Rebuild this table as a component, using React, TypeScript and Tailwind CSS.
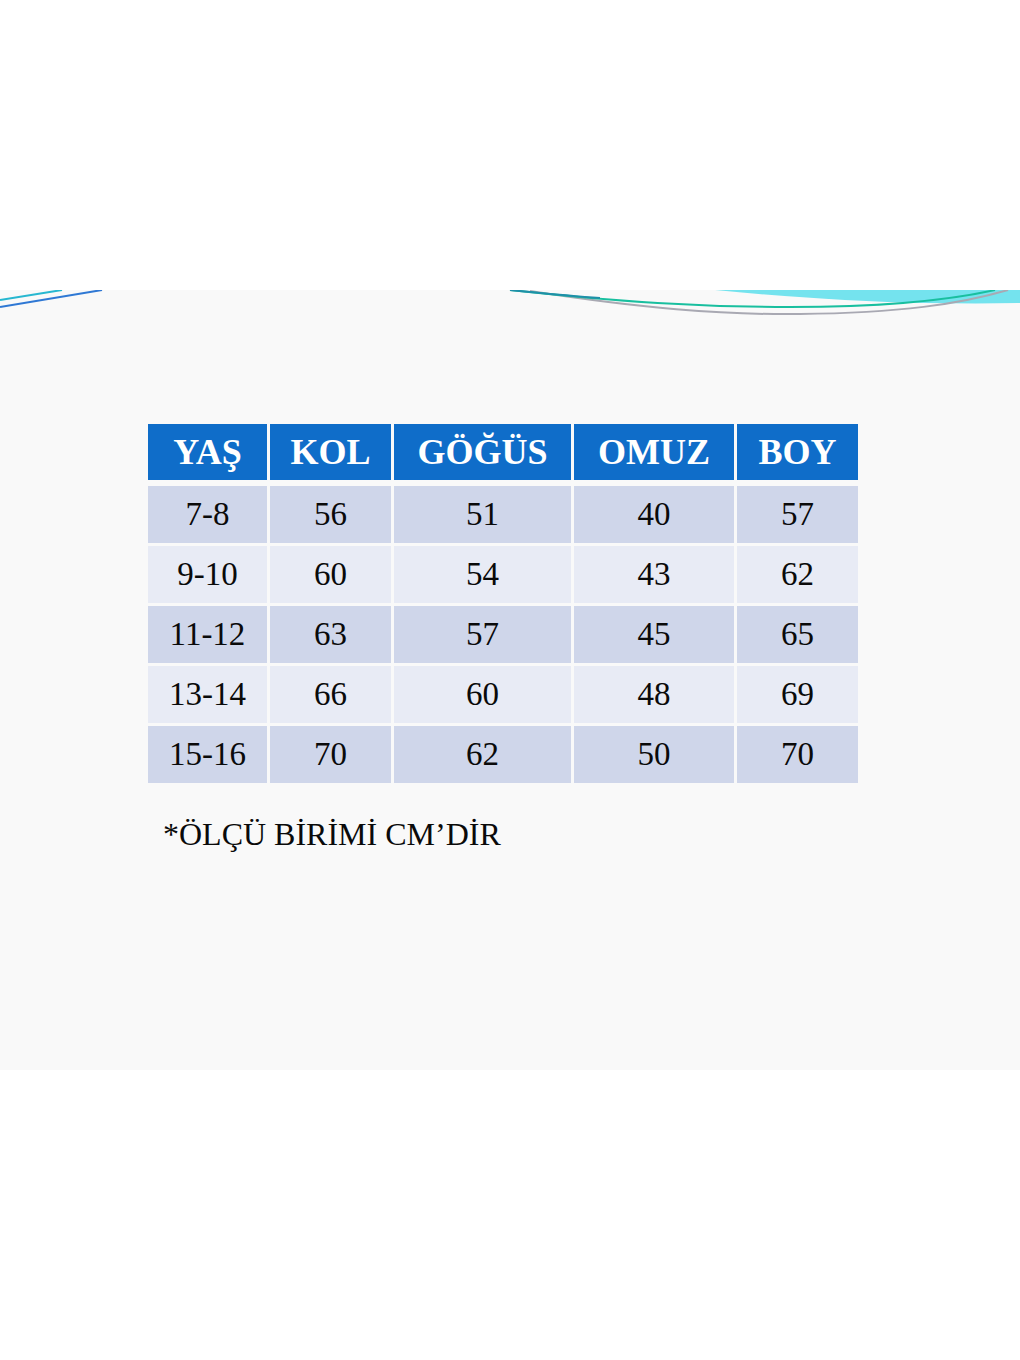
const header = ["YAŞ", "KOL", "GÖĞÜS", "OMUZ", "BOY"];

const rows = [
  ["7-8", "56", "51", "40", "57"],
  ["9-10", "60", "54", "43", "62"],
  ["11-12", "63", "57", "45", "65"],
  ["13-14", "66", "60", "48", "69"],
  ["15-16", "70", "62", "50", "70"],
];

function Waves() {
  return (
    <svg
      className="absolute left-0 top-0 w-full h-[40px]"
      viewBox="0 0 1020 40"
      preserveAspectRatio="none"
    >
      <path d="M0 10 L62 0" stroke="#27b7d0" strokeWidth="2" fill="none" />
      <path d="M0 17 L102 0" stroke="#2f78d4" strokeWidth="2" fill="none" />
      <path d="M715 0 L1020 0 L1020 13 Q880 16 715 0 Z" fill="#74e3ee" />
      <path d="M530 1 C640 18 720 25 800 24 C900 23 960 14 1008 0" stroke="#a9a9b3" strokeWidth="2" fill="none" />
      <path d="M510 0 C620 12 700 17 790 17 C880 17 950 10 995 0" stroke="#19bf9f" strokeWidth="2" fill="none" />
      <path d="M510 0 C540 3 570 6 600 8" stroke="#1f8fa8" strokeWidth="2" fill="none" />
    </svg>
  );
}

export default function App() {
  return (
    <div className="w-[1020px] h-[1360px] bg-white pt-[290px] font-['Liberation_Serif',serif]">
      <div className="relative h-[780px] bg-[#f9f9f9] pt-[134px] pl-[148px]">
        <Waves />

        <div className="w-[710px] grid grid-cols-[119px_121px_177px_160px_121px] gap-x-[3px]">
          {header.map((h) => (
            <div
              key={h}
              className="h-[56px] mb-[6px] bg-[#0f6dc9] flex items-center justify-center text-white font-bold text-[36px]"
            >
              {h}
            </div>
          ))}
        </div>

        <div className="w-[710px] flex flex-col gap-y-[3px]">
          {rows.map((r, i) => (
            <div
              key={r[0]}
              className="grid grid-cols-[119px_121px_177px_160px_121px] gap-x-[3px]"
            >
              {r.map((c, j) => (
                <div
                  key={j}
                  className={
                    "h-[57px] flex items-center justify-center text-[#0a0a0a] text-[33px] " +
                    (i % 2 === 0 ? "bg-[#cfd6ea]" : "bg-[#e8ebf5]")
                  }
                >
                  {c}
                </div>
              ))}
            </div>
          ))}
        </div>

        <p className="mt-[35px] ml-[15px] text-[32px] leading-[32px] text-[#0a0a0a]">
          *ÖLÇÜ BİRİMİ CM’DİR
        </p>
      </div>
    </div>
  );
}
